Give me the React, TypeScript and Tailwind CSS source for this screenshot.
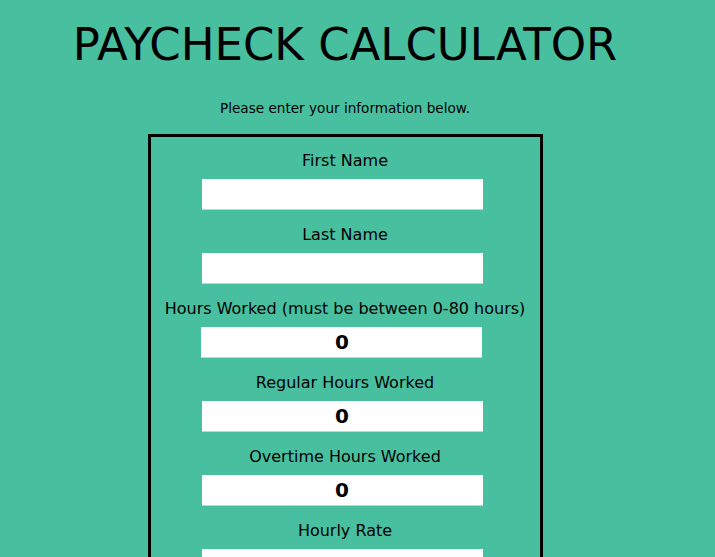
import React from "react";

const fields: { label: string; value: string }[] = [
  { label: "First Name", value: "" },
  { label: "Last Name", value: "" },
  { label: "Hours Worked (must be between 0-80 hours)", value: "0" },
  { label: "Regular Hours Worked", value: "0" },
  { label: "Overtime Hours Worked", value: "0" },
  { label: "Hourly Rate", value: "0" },
  { label: "Gross Pay", value: "0" },
];

export default function App() {
  return (
    <div
      className="min-h-[557px] w-full bg-[#48bf9f] text-black"
      style={{ fontFamily: '"DejaVu Sans", sans-serif' }}
    >
      <div className="w-[690px] flex flex-col items-center">
        <h1 className="pt-[19px] text-[45px] leading-[52px] font-normal">
          PAYCHECK CALCULATOR
        </h1>
        <p className="mt-[29px] text-[13.6px] leading-[16px]">
          Please enter your information below.
        </p>
        <div className="mt-[18px] w-[395px] border-[3px] border-black flex flex-col items-center pt-[14px] pb-4">
          {fields.map((f, i) => (
            <div key={i} className="flex flex-col items-center">
              <label className="text-[16px] leading-[20px] h-[20px] mb-[8px]">
                {f.label}
              </label>
              <input
                readOnly
                value={f.value}
                className="w-[281px] h-[31px] mr-[6px] bg-white border-b border-[#cfcfcf] text-center text-[20px] font-bold outline-none mb-[15px]"
              />
            </div>
          ))}
        </div>
      </div>
    </div>
  );
}
